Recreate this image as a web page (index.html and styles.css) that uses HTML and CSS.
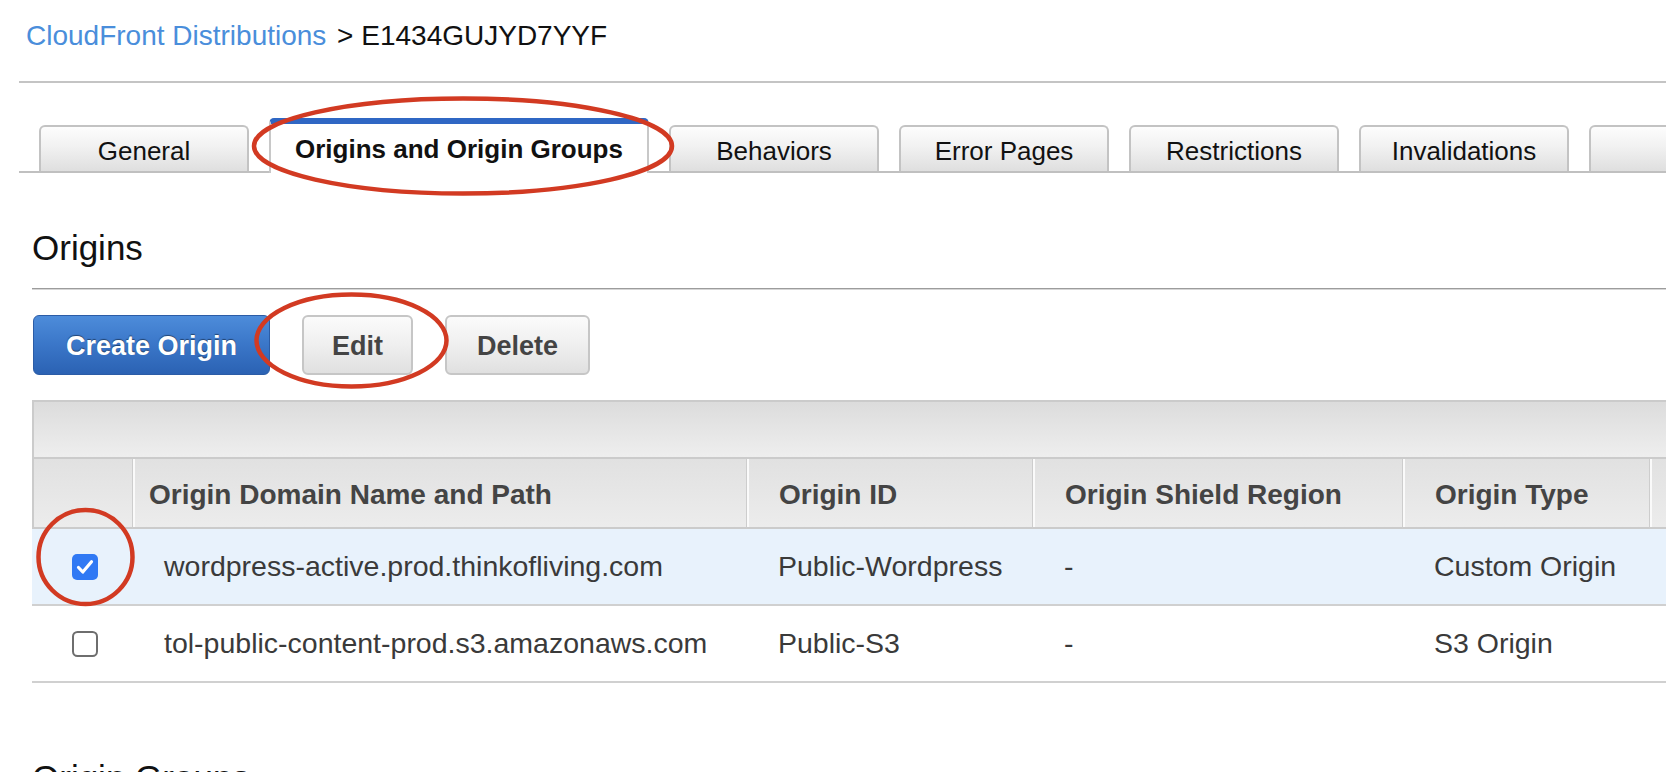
FILE: index.html
```html
<!DOCTYPE html>
<html>
<head>
<meta charset="utf-8">
<link rel="stylesheet" href="styles.css">
</head>
<body>
<div class="page">
  <div class="breadcrumb"><a class="crumb-link">CloudFront Distributions</a> &gt; E1434GUJYD7YYF</div>
  <div class="rule-top"></div>

  <div class="tabs">
    <div class="tab">General</div>
    <div class="tab tab-active">Origins and Origin Groups</div>
    <div class="tab">Behaviors</div>
    <div class="tab">Error Pages</div>
    <div class="tab">Restrictions</div>
    <div class="tab">Invalidations</div>
    <div class="tab"></div>
  </div>

  <h2 class="section-title">Origins</h2>
  <div class="section-rule"></div>

  <div class="actions">
    <button class="btn btn-primary">Create Origin</button>
    <button class="btn">Edit</button>
    <button class="btn btn-wide">Delete</button>
  </div>

  <div class="grid-panel">
    <div class="grid-toolbar"></div>
    <table class="grid">
      <colgroup>
        <col class="c-sel">
        <col class="c-domain">
        <col class="c-id">
        <col class="c-shield">
        <col class="c-type">
        <col class="c-more">
      </colgroup>
      <thead>
        <tr>
          <th class="th-sel"></th>
          <th class="th-domain">Origin Domain Name and Path</th>
          <th>Origin ID</th>
          <th>Origin Shield Region</th>
          <th>Origin Type</th>
          <th></th>
        </tr>
      </thead>
      <tbody>
        <tr class="row-selected">
          <td class="td-sel">
            <svg class="cb" viewBox="0 0 26 26" width="26" height="26"><rect x="0" y="0" width="26" height="26" rx="5" fill="#3079f4"/><path d="M6.5 13.5 L10.8 18 L19.5 7.8" fill="none" stroke="#fff" stroke-width="3.2" stroke-linecap="round" stroke-linejoin="round"/></svg>
          </td>
          <td class="td-domain">wordpress-active.prod.thinkofliving.com</td>
          <td>Public-Wordpress</td>
          <td>-</td>
          <td>Custom Origin</td>
          <td></td>
        </tr>
        <tr>
          <td class="td-sel">
            <svg class="cb" viewBox="0 0 26 26" width="26" height="26"><rect x="1" y="1" width="24" height="24" rx="4.5" fill="#fff" stroke="#6e6e6e" stroke-width="2"/></svg>
          </td>
          <td class="td-domain">tol-public-content-prod.s3.amazonaws.com</td>
          <td>Public-S3</td>
          <td>-</td>
          <td>S3 Origin</td>
          <td></td>
        </tr>
      </tbody>
    </table>
  </div>

  <h2 class="section-title section-title-groups">Origin Groups</h2>

  <svg class="annotations" width="1666" height="772" viewBox="0 0 1666 772">
    <ellipse cx="463" cy="146" rx="209" ry="47.5" fill="none" stroke="#d23a22" stroke-width="4.5"/>
    <ellipse cx="351.5" cy="340.5" rx="95" ry="46" fill="none" stroke="#d23a22" stroke-width="4.5"/>
    <ellipse cx="85.5" cy="557" rx="47" ry="47" fill="none" stroke="#d23a22" stroke-width="4.5"/>
  </svg>
</div>
</body>
</html>
```

FILE: styles.css
```css
html, body {
  margin: 0;
  padding: 0;
  background: #fff;
}

body {
  width: 1666px;
  height: 772px;
  overflow: hidden;
  font-family: "Liberation Sans", Arial, Helvetica, sans-serif;
  color: #111;
}

.page {
  position: relative;
  width: 1666px;
  height: 772px;
  overflow: hidden;
}

.breadcrumb {
  padding: 20px 0 0 26px;
  font-size: 28px;
  line-height: 32px;
  height: 32px;
  white-space: nowrap;
  color: #111;
}

.crumb-link {
  color: #4a8edb;
  text-decoration: none;
  margin-right: 3px;
}

.rule-top {
  margin: 29px 0 0 19px;
  height: 2px;
  background: #c4c4c4;
}

.tabs {
  display: flex;
  align-items: flex-end;
  gap: 20px;
  margin: 35px 0 0 19px;
  padding-left: 20px;
  height: 53px;
  border-bottom: 2px solid #c0c0c0;
  white-space: nowrap;
}

.tab {
  box-sizing: border-box;
  flex: 0 0 210px;
  width: 210px;
  height: 46px;
  border: 2px solid #c3c3c3;
  border-bottom: none;
  border-radius: 6px 6px 0 0;
  background: linear-gradient(#fdfdfd, #f1f1f1 45%, #dfdfdf);
  font-size: 26px;
  line-height: 46px;
  padding-top: 1px;
  text-align: center;
  color: #111;
}

.tab-active {
  flex: 0 0 380px;
  width: 380px;
  height: 55px;
  margin-bottom: -2px;
  border-top: 6px solid #2f67c4;
  border-left: 2px solid #c8c8c8;
  border-right: 2px solid #c8c8c8;
  border-radius: 5px 5px 0 0;
  background: #fff;
  font-weight: bold;
  line-height: 47px;
  padding-top: 2px;
}

.section-title {
  margin: 55px 0 0 32px;
  font-size: 35px;
  line-height: 40px;
  height: 40px;
  font-weight: normal;
  color: #111;
}

.section-rule {
  margin: 20px 0 0 32px;
  height: 0;
  border-top: 1px solid #9c9c9c;
  border-bottom: 1px solid #d6d6d6;
}

.actions {
  display: flex;
  gap: 32px;
  margin: 25px 0 0 33px;
  height: 60px;
}

.btn {
  box-sizing: border-box;
  height: 60px;
  padding: 2px 28px 0;
  border: 2px solid #c6c6c6;
  border-radius: 6px;
  background: linear-gradient(#fbfbfb, #efefef 50%, #e0e0e0);
  font-family: "Liberation Sans", Arial, Helvetica, sans-serif;
  font-size: 27px;
  font-weight: bold;
  color: #444;
  cursor: pointer;
}

.btn-wide {
  padding: 2px 30px 0;
}

.btn-primary {
  border: 1px solid #2b5ca6;
  background: linear-gradient(#4d8cda, #3a76c8 50%, #2b62b3);
  color: #fff;
  text-shadow: 0 -1px 1px rgba(0, 0, 0, 0.45);
  padding: 2px 32px 0;
}

.grid-panel {
  margin: 25px 0 0 32px;
  width: 1760px;
}

.grid-toolbar {
  height: 55px;
  border-top: 2px solid #cbcbcb;
  border-left: 2px solid #cbcbcb;
  border-bottom: 2px solid #cbcbcb;
  background: linear-gradient(#dcdcdc, #eeeeee);
}

.grid {
  table-layout: fixed;
  border-collapse: separate;
  border-spacing: 0;
  width: 1717px;
}

.c-sel { width: 100px; }
.c-domain { width: 614px; }
.c-id { width: 286px; }
.c-shield { width: 370px; }
.c-type { width: 247px; }
.c-more { width: 100px; }

.grid th {
  height: 64px;
  padding: 4px 0 0 32px;
  border-bottom: 2px solid #cbcbcb;
  border-left: 1px solid #cdcdcd;
  box-shadow: inset 2px 0 0 #fafafa;
  background: linear-gradient(#e1e1e1, #ececec);
  text-align: left;
  font-size: 28px;
  font-weight: bold;
  color: #444;
  white-space: nowrap;
  overflow: hidden;
}

.grid th.th-sel {
  border-left: 2px solid #cbcbcb;
  box-shadow: none;
  padding: 0;
}

.grid th.th-domain {
  padding-left: 16px;
}

.grid td {
  height: 75px;
  padding: 0 0 0 32px;
  border-bottom: 2px solid #d0d0d0;
  font-size: 28.5px;
  color: #3a3a3a;
  white-space: nowrap;
  overflow: hidden;
}

.grid td.td-sel {
  padding: 0 0 0 40px;
}

.cb {
  display: block;
  width: 26px;
  height: 26px;
}

.row-selected td {
  background: #e8f2fc;
}

.section-title-groups {
  margin-top: 75px;
}

.annotations {
  position: absolute;
  top: 0;
  left: 0;
  pointer-events: none;
}
```
